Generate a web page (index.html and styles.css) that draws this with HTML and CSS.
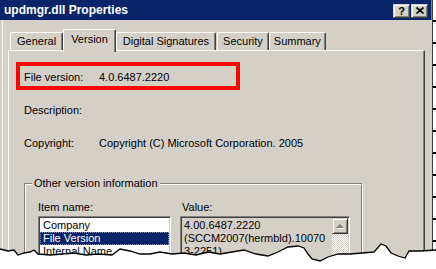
FILE: index.html
```html
<!DOCTYPE html>
<html>
<head>
<meta charset="utf-8">
<link rel="stylesheet" href="styles.css">
</head>
<body>
<div class="screen">
  <div class="window">
    <div class="titlebar">
      <span class="title">updmgr.dll Properties</span>
      <div class="caption-btns">
        <span class="cbtn help">?</span>
        <span class="cbtn close"><svg width="8" height="7" viewBox="0 0 8 7"><path d="M0.5 0.5 L7.5 6.5 M7.5 0.5 L0.5 6.5" stroke="#000" stroke-width="1.7" fill="none"/></svg></span>
      </div>
    </div>
    <div class="body">
      <div class="tabs">
        <div class="tab">General</div>
        <div class="tab active">Version</div>
        <div class="tab">Digital Signatures</div>
        <div class="tab tight gap">Security</div>
        <div class="tab tighter">Summary</div>
      </div>
      <div class="panel">
        <div class="version-box"><span class="label">File version:</span><span>4.0.6487.2220</span></div>
        <div class="row row-desc"><span class="label">Description:</span></div>
        <div class="row row-copy"><span class="label">Copyright:</span><span>Copyright (C) Microsoft Corporation. 2005</span></div>
        <div class="group">
          <div class="legend">Other version information</div>
          <div class="cols">
            <div class="col-names">
              <div class="col-label">Item name:</div>
              <div class="listbox">
                <div class="item">Company</div>
                <div class="item selected">File Version</div>
                <div class="item">Internal Name</div>
                <div class="item">Language</div>
              </div>
            </div>
            <div class="col-values">
              <div class="col-label value-label">Value:</div>
              <div class="valuebox">
                <div class="value-text">
                  <div>4.00.6487.2220</div>
                  <div>(SCCM2007(hermbld).10070</div>
                  <div>3-2251)</div>
                </div>
                <div class="scroll">
                  <div class="scroll-up"><span class="arrow"></span></div>
                  <div class="scroll-track"></div>
                </div>
              </div>
            </div>
          </div>
        </div>
      </div>
    </div>
  </div>
  <div class="edge"></div>
  <svg class="tear" width="436" height="269" viewBox="0 0 436 269">
    <polygon points="0,249 8,251 14,250 18,255 24,253 30,252 34,250 38,254 50,255 62,254 74,253 86,255 98,254 112,255 120,249 130,251 140,254 150,254 160,252 172,254 184,253 196,255 208,252 220,254 232,252 244,250 256,254 268,256 278,252 288,247 298,246 304,248 308,254 312,259 320,261 328,257 338,254 350,254 362,253 374,252 381,244 386,246 391,253 398,256 405,258 409,251 420,251 436,250 436,269 0,269" fill="#fff" stroke="none"/>
    <polyline points="0,249 8,251 14,250 18,255 24,253 30,252 34,250 38,254 50,255 62,254 74,253 86,255 98,254 112,255 120,249 130,251 140,254 150,254 160,252 172,254 184,253 196,255 208,252 220,254 232,252 244,250 256,254 268,256 278,252 288,247 298,246 304,248 308,254 312,259 320,261 328,257 338,254 350,254 362,253 374,252 381,244 386,246 391,253 398,256 405,258 409,251 420,251 436,250" fill="none" stroke="#000" stroke-width="1.3"/>
  </svg>
</div>
</body>
</html>
```

FILE: styles.css
```css
html, body {
  margin: 0;
  padding: 0;
}

body {
  width: 436px;
  height: 269px;
  overflow: hidden;
  background: #fff;
  font-family: "Liberation Sans", Arial, sans-serif;
  font-size: 11px;
  color: #000;
}

.screen {
  position: relative;
  width: 436px;
  height: 269px;
  display: flex;
}

.window {
  width: 433px;
  height: 269px;
  flex: none;
  box-sizing: border-box;
  background: #d4d0c8;
  border-right: 1px solid #404040;
  box-shadow: inset -1px 0 #808080;
  display: flex;
  flex-direction: column;
  overflow: hidden;
}

.titlebar {
  height: 20px;
  flex: none;
  margin-right: 1px;
  background: #0a246a;
  color: #fff;
  display: flex;
  align-items: center;
  justify-content: space-between;
  padding: 0 3px 0 4px;
}

.title {
  font-weight: bold;
  font-size: 12px;
  line-height: 20px;
}

.caption-btns {
  display: flex;
  gap: 1px;
  margin-top: 1px;
}

.cbtn {
  width: 17px;
  height: 14px;
  box-sizing: border-box;
  background: #d4d0c8;
  border: 1px solid;
  border-color: #d4d0c8 #404040 #404040 #d4d0c8;
  box-shadow: inset 1px 1px #fff, inset -1px -1px #808080;
  display: flex;
  align-items: center;
  justify-content: center;
  color: #000;
}

.help {
  font-weight: bold;
  font-size: 11px;
  line-height: 12px;
}

.body {
  flex: 1;
  display: flex;
  flex-direction: column;
  background: linear-gradient(to right, #d4d0c8 2px, #f2f1ee 2px, #f2f1ee 3px, #d4d0c8 3px);
  min-height: 0;
}

.tabs {
  display: flex;
  align-items: flex-end;
  height: 21px;
  margin-top: 9px;
  padding-left: 10px;
  position: relative;
  z-index: 1;
  flex: none;
}

.tab {
  height: 18px;
  box-sizing: border-box;
  padding: 0 6px;
  line-height: 16px;
  border-top: 1px solid #fff;
  border-left: 1px solid #fff;
  border-right: 1px solid #404040;
  box-shadow: inset -1px 0 #808080;
  border-radius: 2px 2px 0 0;
  background: #d4d0c8;
  white-space: nowrap;
}

.tab.active {
  height: 23px;
  margin-bottom: -2px;
  padding: 0 7px;
  line-height: 19px;
}

.tab.tight {
  padding: 0 5px;
}

.tab.tighter {
  padding: 0 4px;
}

.tab.gap {
  margin-left: 1px;
}

.panel {
  flex: 1;
  width: 417px;
  margin-left: 8px;
  box-sizing: border-box;
  border-top: 1px solid #fff;
  border-left: 1px solid #fff;
  border-right: 1px solid #404040;
  box-shadow: inset -1px 0 #808080;
  padding: 11px 0 0 7px;
  min-height: 0;
  overflow: hidden;
}

.version-box {
  width: 224px;
  height: 28px;
  box-sizing: border-box;
  border: 4px solid #ff0000;
  padding: 2px 0 0 4px;
  display: flex;
  align-items: center;
  line-height: 14px;
}

.label {
  width: 75px;
  flex: none;
}

.row {
  display: flex;
  margin-left: 8px;
  line-height: 14px;
}

.row-desc {
  margin-top: 13px;
}

.row-copy {
  margin-top: 19px;
}

.group {
  margin: 33px 0 0 8px;
  width: 338px;
  height: 110px;
  box-sizing: border-box;
  border: 1px solid #808080;
  box-shadow: 1px 1px 0 #fff, inset 1px 1px 0 #fff;
}

.legend {
  width: fit-content;
  margin: -8px 0 0 7px;
  padding: 0 2px;
  background: #d4d0c8;
  line-height: 14px;
}

.cols {
  display: flex;
  padding-left: 13px;
  margin-top: 10px;
}

.col-names {
  width: 133px;
  flex: none;
}

.col-values {
  width: 170px;
  flex: none;
  margin-left: 9px;
}

.col-label {
  line-height: 14px;
  margin-bottom: 2px;
}

.value-label {
  padding-left: 2px;
}

.listbox {
  height: 60px;
  box-sizing: border-box;
  background: #fff;
  border: 1px solid;
  border-color: #808080 #fff #fff #808080;
  box-shadow: inset 1px 1px #404040, inset -1px -1px #d4d0c8;
  padding: 2px 1px 0 1px;
}

.item {
  line-height: 13px;
  padding-left: 3px;
  white-space: nowrap;
}

.item.selected {
  background: #0a246a;
  color: #fff;
  outline: 1px dotted #8a94b8;
  outline-offset: -1px;
}

.valuebox {
  height: 60px;
  box-sizing: border-box;
  background: #d4d0c8;
  border: 1px solid;
  border-color: #808080 #fff #fff #808080;
  box-shadow: inset 1px 1px #404040, inset -1px -1px #d4d0c8;
  padding: 1px 1px 0 1px;
  display: flex;
}

.value-text {
  flex: 1;
  padding: 1px 0 0 2px;
  line-height: 13px;
  white-space: nowrap;
  overflow: hidden;
}

.scroll {
  width: 16px;
  flex: none;
  display: flex;
  flex-direction: column;
}

.scroll-up {
  height: 16px;
  flex: none;
  box-sizing: border-box;
  background: #d4d0c8;
  border: 1px solid;
  border-color: #d4d0c8 #404040 #404040 #d4d0c8;
  box-shadow: inset 1px 1px #fff, inset -1px -1px #808080;
  display: flex;
  align-items: center;
  justify-content: center;
}

.arrow {
  width: 0;
  height: 0;
  border-left: 4px solid transparent;
  border-right: 4px solid transparent;
  border-bottom: 4px solid #808080;
  filter: drop-shadow(1px 1px 0 #fff);
}

.scroll-track {
  flex: 1;
  background: repeating-conic-gradient(#fff 0 25%, #d4d0c8 0 50%) 0 0 / 2px 2px;
}

.edge {
  width: 3px;
  height: 269px;
  flex: none;
  background: repeating-linear-gradient(to bottom, transparent 0 20px, #000 20px 22px);
}

.tear {
  position: absolute;
  left: 0;
  top: 0;
  pointer-events: none;
}
```
